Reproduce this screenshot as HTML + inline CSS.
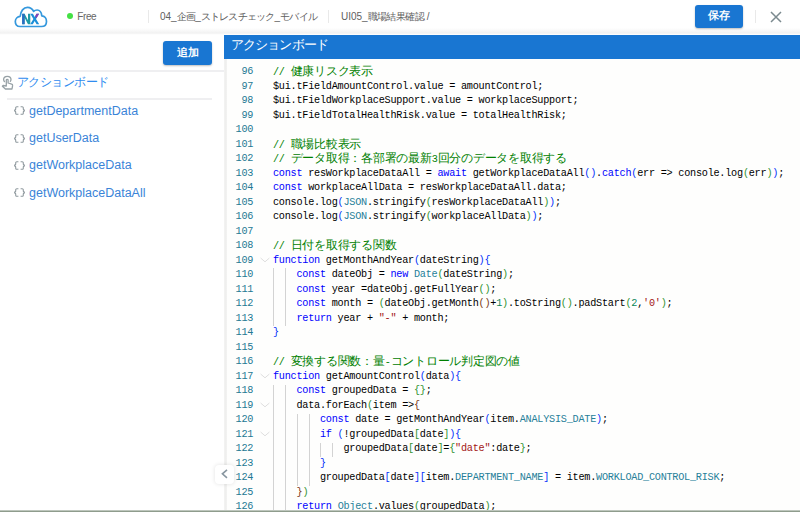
<!DOCTYPE html>
<html><head><meta charset="utf-8">
<style>
html,body{margin:0;padding:0;width:800px;height:512px;overflow:hidden;background:#fff;font-family:"Liberation Sans",sans-serif;}
*{box-sizing:border-box;}
.abs{position:absolute;}
#hdr{position:absolute;left:0;top:0;width:800px;height:35px;background:linear-gradient(#fff 0,#fff 28px,#f7f7f7 31px,#f1f1f1 33.2px,#fbfbfb 34px,#fff 35px);z-index:5;}
.htxt{position:absolute;top:9.5px;font-size:10px;color:#606060;line-height:14px;white-space:nowrap;}
.hj{letter-spacing:-0.77px;}
.hj2{letter-spacing:-0.6px;}
.vdiv{position:absolute;top:10px;width:1.2px;height:13px;background:#e9e9e9;}
.btn{position:absolute;background:#1976d2;border-radius:3px;box-shadow:0 1px 2px rgba(0,0,0,0.25);color:#fff;font-weight:bold;text-align:center;}
#left{position:absolute;left:0;top:34px;width:224px;height:478px;background:#fff;}
.sep{position:absolute;height:2px;background:#efeff1;}
.item{position:absolute;left:14px;height:16px;font-size:12.5px;color:#3a84d8;line-height:16px;white-space:nowrap;}
.item .br{position:absolute;left:-1px;top:1.8px;}
.item span{position:absolute;left:15px;top:0;}
#strip{position:absolute;left:224px;top:35px;width:3px;height:477px;background:linear-gradient(90deg,#f4f4f3,#efefee 50%,#f3f3f2);}
#bar{position:absolute;left:224px;top:35px;width:576px;height:24px;background:#1976d2;color:#fff;font-size:13px;letter-spacing:-0.9px;line-height:19.5px;padding-left:7px;z-index:6;}
#editor{position:absolute;left:227px;top:59px;width:573px;height:453px;background:#fefefd;overflow:hidden;}
#nums{position:absolute;left:0;top:6.3px;width:26.2px;text-align:right;font-family:"Liberation Mono",monospace;font-size:10.2px;letter-spacing:-0.241px;line-height:14.51px;color:#237893;}
#code{position:absolute;left:46px;top:6.3px;font-family:"Liberation Mono",monospace;font-size:10.2px;letter-spacing:-0.241px;line-height:14.51px;color:#000;white-space:pre;}
#code div,#nums div{height:14.51px;}
.j{font-size:11.76px;letter-spacing:-0.24px;}
.c{color:#008000;}
.k{color:#0000ff;}
.t{color:#267f99;}
.s{color:#a31515;}
.n{color:#098658;}
.b1{color:#0431fa;}
.b2{color:#319331;}
.b3{color:#7b3814;}
.guide{position:absolute;width:1px;background:#d3d3d3;}
.fold{position:absolute;left:33px;width:10px;height:6px;}
#collapse{position:absolute;left:214.5px;top:465px;width:19px;height:19px;background:#fff;border-radius:4px;box-shadow:0 0 4px rgba(0,0,0,0.12);z-index:6;}
#bottom{position:absolute;left:0;top:510px;width:800px;height:2px;background:linear-gradient(#d5dbd4,#778775);z-index:7;}
</style></head><body>
<svg width="0" height="0" style="position:absolute"><defs><path id="brc" fill="#8f999e" d="M4 7v2c0 .55-.45 1-1 1H2v4h1c.55 0 1 .45 1 1v2c0 1.65 1.35 3 3 3h3v-2H7c-.55 0-1-.45-1-1v-2c0-1.3-.84-2.42-2-2.83v-.34C5.160 11.42 6 10.3 6 9V7c0-.55.45-1 1-1h3V4H7C5.35 4 4 5.35 4 7zM21 10c-.55 0-1-.45-1-1V7c0-1.65-1.35-3-3-3h-3v2h3c.55 0 1 .45 1 1v2c0 1.3.84 2.42 2 2.83v.34c-1.16.41-2 1.52-2 2.83v2c0 .55-.45 1-1 1h-3v2h3c1.65 0 3-1.35 3-3v-2c0-.55.45-1 1-1h1v-4h-1z"/></defs></svg>
<div id="hdr">
  <svg class="abs" style="left:13px;top:4.5px" width="36" height="26" viewBox="0 0 36 26">
    <path d="M7,21.5 C3.5,21.5 2.3,19 2.3,16.6 C2.3,13.8 4.4,11.5 7.2,11.3 C7.6,6.2 10.5,2.3 14.5,2.3 C17.5,2.3 19.6,4.2 20.6,6.4 C21.6,5.4 22.7,5 24.1,5 C26.8,5 28.4,7.2 28.8,10.8 C31.7,11 33.5,13.6 33.5,16.4 C33.5,19.5 31.5,21.5 28.5,21.5 Z" fill="none" stroke="#3598dd" stroke-width="1.7" stroke-linejoin="round"/>
    <g transform="translate(0,-0.8)"><path d="M9.2,20 L9.2,9.6 L11.6,9.6 L15,16 L15,9.6 L17.3,9.6 L17.3,20 L15,20 L11.6,13.6 L11.6,20 Z" fill="#1f9aa6"/>
    <rect x="9.2" y="9.6" width="2.4" height="10.4" fill="#2a6cc4"/>
    <path d="M17.3,9.6 L19.9,9.6 L21.7,12.9 L23.5,9.6 L26.1,9.6 L23,14.8 L26.2,20 L23.6,20 L21.7,16.7 L19.8,20 L17.2,20 L20.4,14.8 Z" fill="#1c8fd8"/>
    <path d="M23.5,9.6 L26.1,9.6 L23.4,14.1 L22.2,12.2 Z" fill="#8d3fb3"/></g>
  </svg>
  <div class="abs" style="left:67px;top:13.3px;width:6px;height:6px;border-radius:50%;background:#44e044;"></div>
  <div class="htxt" style="left:77.3px;top:10.2px;font-size:10px;letter-spacing:-0.4px;color:#666;">Free</div>
  <div class="vdiv" style="left:147.5px;"></div>
  <div class="htxt" style="left:160px;">04_<span class="hj">企画</span>_<span class="hj">ストレスチェック</span>_<span class="hj">モバイル</span></div>
  <div class="vdiv" style="left:327.8px;"></div>
  <div class="htxt" style="left:341px;">UI05_<span class="hj2">職場結果確認</span> /</div>
  <div class="btn" style="left:695px;top:5px;width:48px;height:23px;font-size:10.5px;line-height:21px;">保存</div>
  <div class="vdiv" style="left:755px;"></div>
  <svg class="abs" style="left:769px;top:10px" width="14" height="14" viewBox="0 0 14 14"><path d="M2,2 L12,12 M12,2 L2,12" stroke="#7b8a8f" stroke-width="1.5"/></svg>
</div>
<div id="left">
  <div class="btn" style="left:163px;top:7px;width:49px;height:23.5px;font-size:10.6px;line-height:23.5px;">追加</div>
  <div class="sep" style="left:0;top:36px;width:224px;"></div>
  <svg class="abs" style="left:0px;top:41px" width="15" height="15" viewBox="0 0 15 15"><path d="M4.9,6.9 C3.9,6.3 3.6,5.4 3.6,4.5 C3.6,2.6 5.2,1.3 7.3,1.3 C9.4,1.3 11,2.6 11,4.5 C11,5.4 10.7,6.2 10,6.8" fill="none" stroke="#97a1a6" stroke-width="1.3"/><path d="M6.3,4.9 C6.3,4.1 8.1,4.1 8.1,4.9 V8 L11.7,9.2 C12.4,9.5 12.7,10 12.6,10.7 L12,14 H5.4 L2.4,11.2 L3.1,10.5 L6.3,11 Z" fill="none" stroke="#97a1a6" stroke-width="1.3" stroke-linejoin="round"/></svg>
  <div class="abs" style="left:16.5px;top:40.5px;font-size:12px;letter-spacing:-0.5px;line-height:14px;color:#2f8cef;white-space:nowrap;">アクションボード</div>
  <div class="sep" style="left:7px;top:64px;width:205px;"></div>
  <div class="item" style="top:68.6px;"><svg class="br" width="13" height="13" viewBox="0 0 24 24"><use href="#brc"/></svg><span>getDepartmentData</span></div>
  <div class="item" style="top:95.8px;"><svg class="br" width="13" height="13" viewBox="0 0 24 24"><use href="#brc"/></svg><span>getUserData</span></div>
  <div class="item" style="top:123px;"><svg class="br" width="13" height="13" viewBox="0 0 24 24"><use href="#brc"/></svg><span>getWorkplaceData</span></div>
  <div class="item" style="top:150.6px;"><svg class="br" width="13" height="13" viewBox="0 0 24 24"><use href="#brc"/></svg><span>getWorkplaceDataAll</span></div>
</div>
<div id="strip"></div>
<div id="bar">アクションボード</div>
<div id="editor">
  <div id="nums">
<div>96</div>
<div>97</div>
<div>98</div>
<div>99</div>
<div>100</div>
<div>101</div>
<div>102</div>
<div>103</div>
<div>104</div>
<div>105</div>
<div>106</div>
<div>107</div>
<div>108</div>
<div>109</div>
<div>110</div>
<div>111</div>
<div>112</div>
<div>113</div>
<div>114</div>
<div>115</div>
<div>116</div>
<div>117</div>
<div>118</div>
<div>119</div>
<div>120</div>
<div>121</div>
<div>122</div>
<div>123</div>
<div>124</div>
<div>125</div>
<div>126</div>
  </div>
<div class="guide" style="left:46.30px;top:209.44px;height:58.04px"></div>
<div class="guide" style="left:58.06px;top:209.44px;height:58.04px"></div>
<div class="guide" style="left:46.30px;top:325.52px;height:130.59px"></div>
<div class="guide" style="left:58.06px;top:325.52px;height:130.59px"></div>
<div class="guide" style="left:69.82px;top:354.54px;height:72.55px"></div>
<div class="guide" style="left:81.58px;top:354.54px;height:72.55px"></div>
<div class="guide" style="left:93.34px;top:383.56px;height:14.51px"></div>
<div class="guide" style="left:105.10px;top:383.56px;height:14.51px"></div><svg class="fold" style="top:198.13px" width="10" height="6" viewBox="0 0 10 6"><path d="M0.6,1 L5,4.8 L9.4,1" fill="none" stroke="#dedede" stroke-width="1"/></svg><svg class="fold" style="top:314.21px" width="10" height="6" viewBox="0 0 10 6"><path d="M0.6,1 L5,4.8 L9.4,1" fill="none" stroke="#dedede" stroke-width="1"/></svg><svg class="fold" style="top:343.23px" width="10" height="6" viewBox="0 0 10 6"><path d="M0.6,1 L5,4.8 L9.4,1" fill="none" stroke="#dedede" stroke-width="1"/></svg><svg class="fold" style="top:372.25px" width="10" height="6" viewBox="0 0 10 6"><path d="M0.6,1 L5,4.8 L9.4,1" fill="none" stroke="#dedede" stroke-width="1"/></svg>
  <div id="code"><div><span class="c">// <span class="j">健康リスク表示</span></span></div><div>$ui.tFieldAmountControl.value = amountControl;</div><div>$ui.tFieldWorkplaceSupport.value = workplaceSupport;</div><div>$ui.tFieldTotalHealthRisk.value = totalHealthRisk;</div><div></div><div><span class="c">// <span class="j">職場比較表示</span></span></div><div><span class="c">// <span class="j">データ取得：各部署の最新</span>3<span class="j">回分のデータを取得する</span></span></div><div><span class="k">const</span> resWorkplaceDataAll = <span class="k">await</span> getWorkplaceDataAll<span class="b1">()</span>.<span class="k">catch</span><span class="b1">(</span>err =&gt; console.log<span class="b2">(</span>err<span class="b2">)</span><span class="b1">)</span>;</div><div><span class="k">const</span> workplaceAllData = resWorkplaceDataAll.data;</div><div>console.log<span class="b1">(</span><span class="t">JSON</span>.stringify<span class="b2">(</span>resWorkplaceDataAll<span class="b2">)</span><span class="b1">)</span>;</div><div>console.log<span class="b1">(</span><span class="t">JSON</span>.stringify<span class="b2">(</span>workplaceAllData<span class="b2">)</span><span class="b1">)</span>;</div><div></div><div><span class="c">// <span class="j">日付を取得する関数</span></span></div><div><span class="k">function</span> getMonthAndYear<span class="b1">(</span>dateString<span class="b1">){</span></div><div>    <span class="k">const</span> dateObj = <span class="k">new</span> <span class="t">Date</span><span class="b2">(</span>dateString<span class="b2">)</span>;</div><div>    <span class="k">const</span> year =dateObj.getFullYear<span class="b2">()</span>;</div><div>    <span class="k">const</span> month = <span class="b2">(</span>dateObj.getMonth<span class="b3">()</span>+<span class="n">1</span><span class="b2">)</span>.toString<span class="b2">()</span>.padStart<span class="b2">(</span><span class="n">2</span>,<span class="s">&#x27;0&#x27;</span><span class="b2">)</span>;</div><div>    <span class="k">return</span> year + <span class="s">&quot;-&quot;</span> + month;</div><div><span class="b1">}</span></div><div></div><div><span class="c">// <span class="j">変換する関数：量</span>-<span class="j">コントロール判定図の値</span></span></div><div><span class="k">function</span> getAmountControl<span class="b1">(</span>data<span class="b1">){</span></div><div>    <span class="k">const</span> groupedData = <span class="b2">{}</span>;</div><div>    data.forEach<span class="b2">(</span>item =&gt;<span class="b3">{</span></div><div>        <span class="k">const</span> date = getMonthAndYear<span class="b1">(</span>item.<span class="t">ANALYSIS_DATE</span><span class="b1">)</span>;</div><div>        <span class="k">if</span> <span class="b1">(</span>!groupedData<span class="b2">[</span>date<span class="b2">]</span><span class="b1">){</span></div><div>            groupedData<span class="b2">[</span>date<span class="b2">]</span>=<span class="b2">{</span><span class="s">&quot;date&quot;</span>:date<span class="b2">}</span>;</div><div>        <span class="b1">}</span></div><div>        groupedData<span class="b1">[</span>date<span class="b1">][</span>item.<span class="t">DEPARTMENT_NAME</span><span class="b1">]</span> = item.<span class="t">WORKLOAD_CONTROL_RISK</span>;</div><div>    <span class="b3">}</span><span class="b2">)</span></div><div>    <span class="k">return</span> <span class="t">Object</span>.values<span class="b2">(</span>groupedData<span class="b2">)</span>;</div></div>
</div>
<div id="collapse"><svg class="abs" style="left:5px;top:4px" width="10" height="10" viewBox="0 0 10 10"><path d="M7,0.8 L2.4,4.8 L7,8.8" fill="none" stroke="#8896a0" stroke-width="1.6"/></svg></div>
<div id="bottom"></div>
</body></html>
